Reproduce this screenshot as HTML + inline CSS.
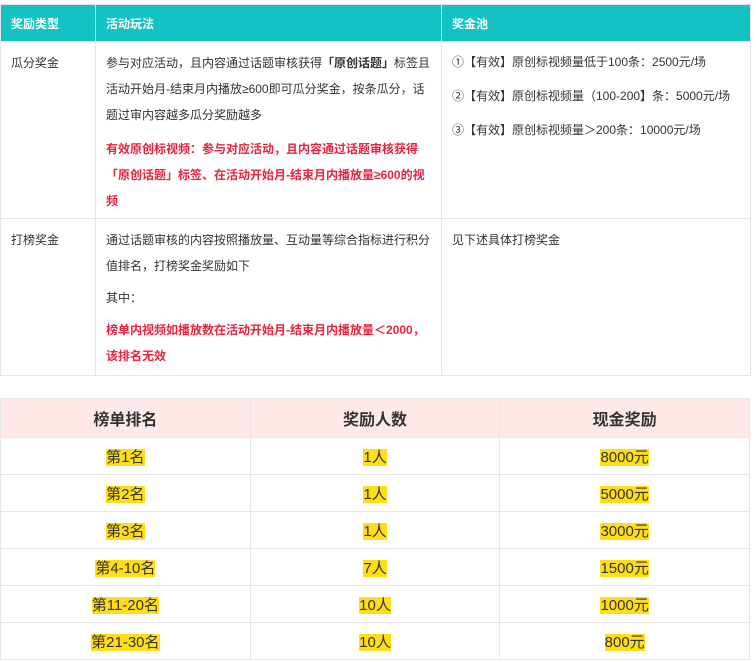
<!DOCTYPE html>
<html><head><meta charset="utf-8"><style>
body{margin:0;background:#fff;width:756px;height:662px;position:relative;overflow:hidden;font-family:"Liberation Sans","Noto Sans CJK SC",sans-serif;color:#333;}
table{border-collapse:collapse;position:absolute;table-layout:fixed;}
#t1{left:0;top:4px;width:750px;font-size:12px;}
#t1 td,#t1 th{border:1px solid #e6e6e6;vertical-align:top;text-align:left;padding:0 10px;}
#t1 th{background:#14c2c3;color:#fff;font-weight:bold;height:36px;vertical-align:middle;}
#t1 td{line-height:26px;}
.r{color:#e8233f;font-weight:bold;}
#t2{left:0;top:398px;width:750px;font-size:15px;text-align:center;}
#t2 td,#t2 th{border:1px solid #e6e6e6;height:36px;padding:0;}
#t2 th{background:#ffe8e8;font-size:16px;height:38px;color:#333;}
#t2 span{background:#ffde17;}
</style></head><body>
<table id="t1">
<colgroup><col style="width:95px"><col style="width:346px"><col style="width:309px"></colgroup>
<tr><th>奖励类型</th><th>活动玩法</th><th>奖金池</th></tr>
<tr style="height:177px"><td style="padding-top:8px">瓜分奖金</td>
<td style="padding-top:8px">参与对应活动，且内容通过话题审核获得<b>「原创话题」</b>标签且活动开始月-结束月内播放≥600即可瓜分奖金，按条瓜分，话题过审内容越多瓜分奖励越多<div class="r" style="margin-top:8px">有效原创标视频：参与对应活动，且内容通过话题审核获得「原创话题」标签、在活动开始月-结束月内播放量≥600的视频</div></td>
<td style="padding-top:3px;line-height:34px">①【有效】原创标视频量低于100条：2500元/场<br>②【有效】原创标视频量（100-200】条：5000元/场<br>③【有效】原创标视频量＞200条：10000元/场</td></tr>
<tr style="height:157px"><td style="padding-top:8px">打榜奖金</td>
<td style="padding-top:8px">通过话题审核的内容按照播放量、互动量等综合指标进行积分值排名，打榜奖金奖励如下<div style="margin-top:6px">其中：</div><div class="r" style="margin-top:6px">榜单内视频如播放数在活动开始月-结束月内播放量＜2000，该排名无效</div></td>
<td style="padding-top:8px">见下述具体打榜奖金</td></tr>
</table>
<table id="t2">
<tr><th>榜单排名</th><th>奖励人数</th><th>现金奖励</th></tr>
<tr><td><span>第1名</span></td><td><span>1人</span></td><td><span>8000元</span></td></tr>
<tr><td><span>第2名</span></td><td><span>1人</span></td><td><span>5000元</span></td></tr>
<tr><td><span>第3名</span></td><td><span>1人</span></td><td><span>3000元</span></td></tr>
<tr><td><span>第4-10名</span></td><td><span>7人</span></td><td><span>1500元</span></td></tr>
<tr><td><span>第11-20名</span></td><td><span>10人</span></td><td><span>1000元</span></td></tr>
<tr><td><span>第21-30名</span></td><td><span>10人</span></td><td><span>800元</span></td></tr>
</table>
</body></html>
